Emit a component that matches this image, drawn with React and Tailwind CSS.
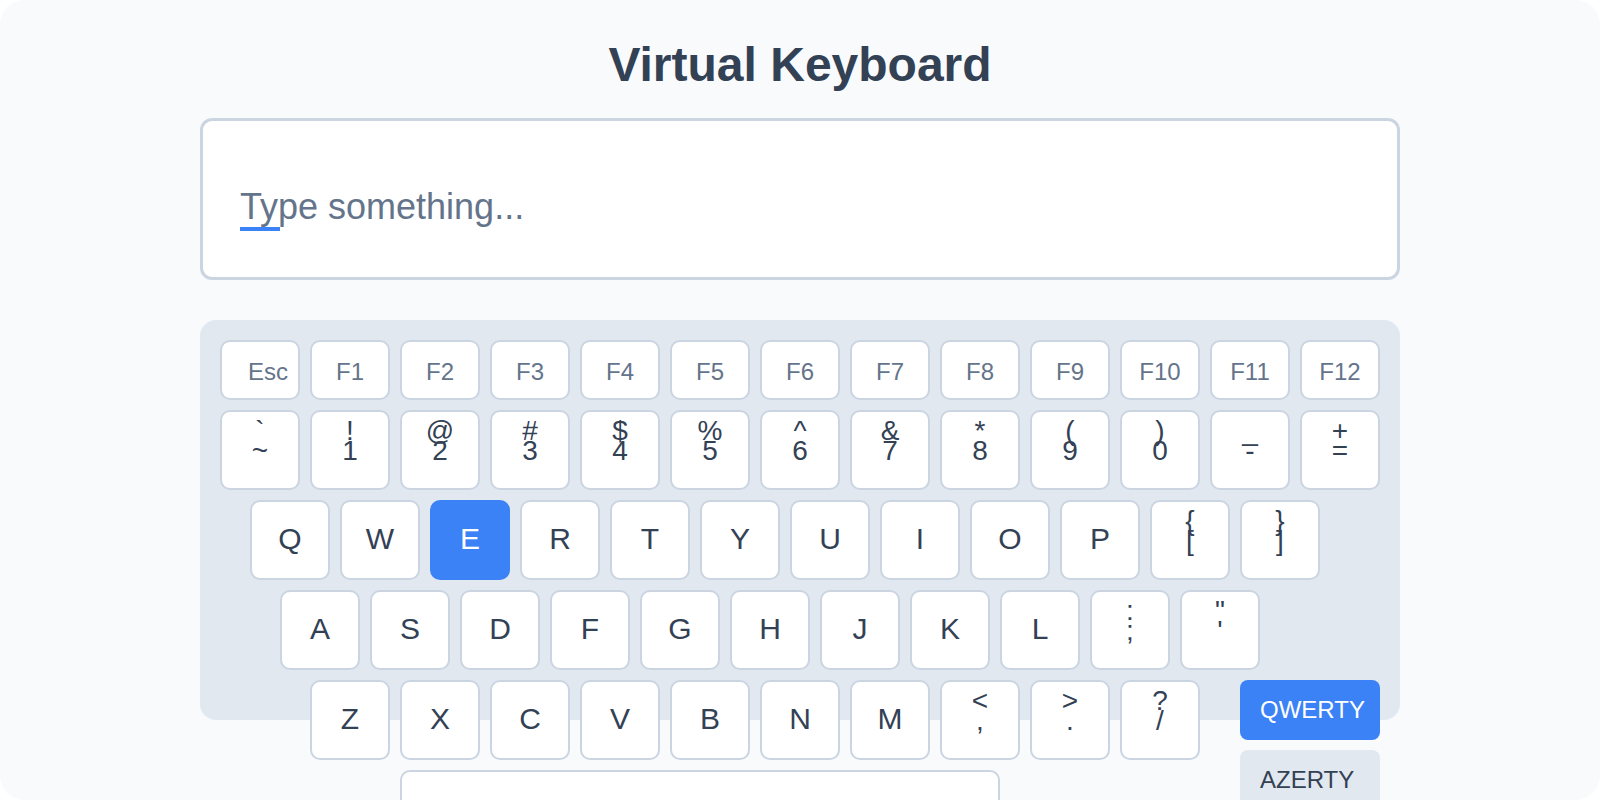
import React from 'react'

const fnRow = ['Esc', 'F1', 'F2', 'F3', 'F4', 'F5', 'F6', 'F7', 'F8', 'F9', 'F10', 'F11', 'F12']

const numRow = [
  ['`', '~'], ['!', '1'], ['@', '2'], ['#', '3'], ['$', '4'], ['%', '5'], ['^', '6'],
  ['&', '7'], ['*', '8'], ['(', '9'], [')', '0'], ['_', '-'], ['+', '='],
]

const topRow = ['Q', 'W', 'E', 'R', 'T', 'Y', 'U', 'I', 'O', 'P', ['{', '['], ['}', ']']]
const homeRow = ['A', 'S', 'D', 'F', 'G', 'H', 'J', 'K', 'L', [':', ';'], ['"', "'"]]
const bottomRow = ['Z', 'X', 'C', 'V', 'B', 'N', 'M', ['<', ','], ['>', '.'], ['?', '/']]

const FnKey = ({ label }) => (
  <div
    className={`w-[80px] h-[60px] shrink-0 rounded-[10px] border-2 border-[#cbd5e1] bg-white flex items-center justify-center pt-[3px] text-[24px] leading-none text-[#64748b] ${label === 'Esc' ? 'pl-[16px]' : ''}`}
  >
    {label}
  </div>
)

const Key = ({ k, active }) => {
  if (Array.isArray(k)) {
    return (
      <div className="w-[80px] h-[80px] shrink-0 rounded-[10px] border-2 border-[#cbd5e1] bg-white flex flex-col items-center pt-[9px] text-[28px] leading-[20px] text-[#334155]">
        <span>{k[0]}</span>
        <span>{k[1]}</span>
      </div>
    )
  }
  return (
    <div
      className={`w-[80px] h-[80px] shrink-0 rounded-[10px] border-2 flex items-center justify-center pb-[3px] text-[30px] leading-none ${
        active ? 'bg-[#3b82f6] border-[#3b82f6] text-white' : 'bg-white border-[#cbd5e1] text-[#334155]'
      }`}
    >
      {k}
    </div>
  )
}

export default function App() {
  return (
    <div className="w-[1600px] h-[800px] bg-white font-['Liberation_Sans',Arial,sans-serif]">
      <div className="w-full h-full rounded-3xl overflow-hidden bg-[#f8fafc] flex flex-col items-center pt-[41px]">
        <h1 className="text-[48px] leading-[48px] font-bold text-[#334155]">Virtual Keyboard</h1>

        <div className="mt-[29px] w-[1200px] h-[162px] shrink-0 rounded-xl border-[3px] border-[#cbd5e1] bg-white px-[37px] pt-[66px]">
          <div className="relative inline-block text-[36px] leading-[40px] text-[#64748b]">
            Type something...
            <span className="absolute left-0 top-[40px] w-[40px] h-[4px] bg-[#3b82f6]" />
          </div>
        </div>

        <div className="mt-[40px] w-[1200px] h-[400px] shrink-0 rounded-2xl bg-[#e2e8f0] p-[20px] flex flex-col gap-[10px]">
          <div className="flex gap-[10px]">
            {fnRow.map((f) => (
              <FnKey key={f} label={f} />
            ))}
          </div>
          <div className="flex gap-[10px]">
            {numRow.map((k, i) => (
              <Key key={i} k={k} />
            ))}
          </div>
          <div className="flex gap-[10px] ml-[30px]">
            {topRow.map((k, i) => (
              <Key key={i} k={k} active={k === 'E'} />
            ))}
          </div>
          <div className="flex gap-[10px] ml-[60px]">
            {homeRow.map((k, i) => (
              <Key key={i} k={k} />
            ))}
          </div>
          <div className="flex h-[80px] shrink-0 items-start ml-[90px]">
            <div className="flex gap-[10px]">
              {bottomRow.map((k, i) => (
                <Key key={i} k={k} />
              ))}
            </div>
            <div className="ml-auto flex flex-col gap-[10px]">
              <button className="w-[140px] h-[60px] rounded-[8px] bg-[#3b82f6] text-white text-[24px] leading-none text-left pl-[20px]">
                QWERTY
              </button>
              <button className="w-[140px] h-[60px] rounded-[8px] bg-[#e2e8f0] text-[#334155] text-[24px] leading-none text-left pl-[20px]">
                AZERTY
              </button>
            </div>
          </div>
          <div className="flex ml-[180px]">
            <div className="w-[600px] h-[80px] shrink-0 rounded-[10px] border-2 border-[#cbd5e1] bg-white" />
          </div>
        </div>
      </div>
    </div>
  )
}
